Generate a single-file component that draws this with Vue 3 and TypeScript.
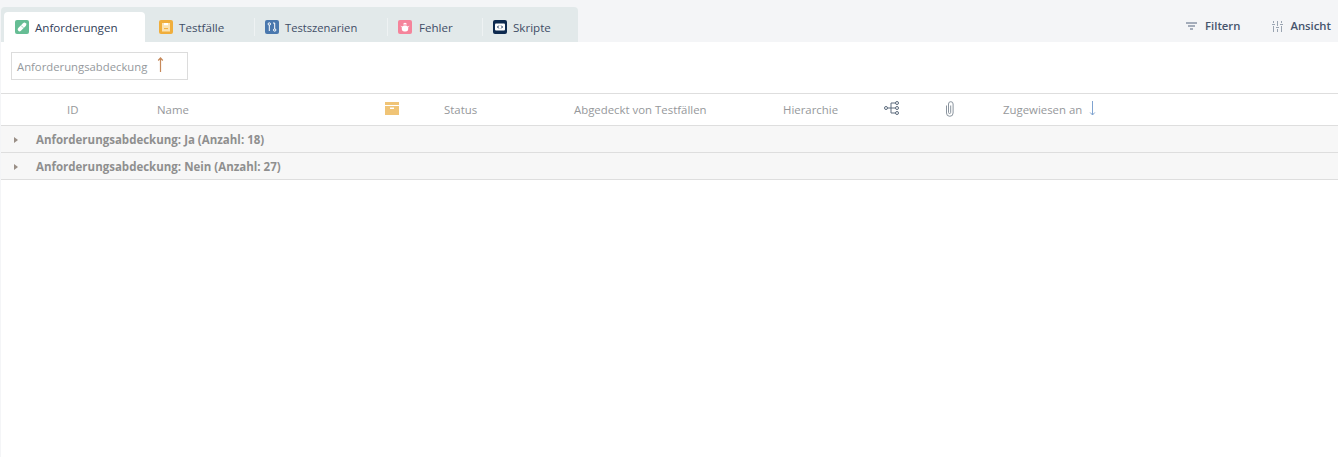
<script setup lang="ts">
interface Tab { label: string; color: string; kind: string; active?: boolean }
const tabs: Tab[] = [
  { label: 'Anforderungen', color: '#66bd94', kind: 'req', active: true },
  { label: 'Testfälle', color: '#f0ae3c', kind: 'case' },
  { label: 'Testszenarien', color: '#4a78ae', kind: 'scen' },
  { label: 'Fehler', color: '#f5849b', kind: 'bug' },
  { label: 'Skripte', color: '#0d2a4f', kind: 'script' },
]
const groups = ['Anforderungsabdeckung: Ja (Anzahl: 18)', 'Anforderungsabdeckung: Nein (Anzahl: 27)']
</script>

<template>
  <div class="page">
    <header class="top">
      <nav class="tabs">
        <div v-for="t in tabs" :key="t.label" class="tab" :class="[{ active: t.active }, 'tab-' + t.kind]">
          <span class="tab-icon" :style="{ background: t.color }">
            <svg v-if="t.kind === 'req'" width="14" height="14" viewBox="0 0 14 14" fill="none">
              <path d="M4.6 9.4 9.4 4.6" stroke="#fff" stroke-width="3.8" stroke-linecap="round" />
              <path d="M6.2 5.6 8.4 7.8" stroke="#66bd94" stroke-width=".7" />
            </svg>
            <svg v-else-if="t.kind === 'case'" width="14" height="14" viewBox="0 0 14 14">
              <rect x="3" y="3" width="8" height="8.5" fill="#fbe3b4" />
              <path d="M5 3h4v2.2H5z" fill="#fff" />
              <path d="M5 8.6h4" stroke="#f0ae3c" stroke-width="1" />
            </svg>
            <svg v-else-if="t.kind === 'scen'" width="14" height="14" viewBox="0 0 14 14" fill="none" stroke="#fff" stroke-width="1">
              <circle cx="4.3" cy="4" r="1.2" /><path d="M4.3 5.2V11" />
              <circle cx="9.7" cy="10" r="1.2" /><path d="M9.7 8.8V3H8" />
            </svg>
            <svg v-else-if="t.kind === 'bug'" width="14" height="14" viewBox="0 0 14 14">
              <path d="M5.2 4.6a1.8 1.8 0 0 1 3.6 0Z" fill="#fff" />
              <rect x="3.8" y="5.4" width="6.4" height="6" rx="2.6" fill="#fff" />
              <path d="M2.8 6.2 4 7M11.2 6.2 10 7" stroke="#fff" stroke-width=".8" />
            </svg>
            <svg v-else width="14" height="14" viewBox="0 0 14 14">
              <rect x="2" y="3.5" width="10" height="7" rx="1" fill="#fff" />
              <path d="M5.8 5.6 4.5 7l1.3 1.4M8.2 5.6 9.5 7 8.2 8.4" fill="none" stroke="#0d2a4f" stroke-width="1" />
            </svg>
          </span>
          <span class="tab-label">{{ t.label }}</span>
        </div>
      </nav>
      <div class="actions">
        <button class="action filter-action" type="button">
          <svg width="11" height="8" viewBox="0 0 11 8" fill="none" stroke="#54657e" stroke-width="1">
            <path d="M0 1h11M2 4h7M4 7h3" />
          </svg>
          Filtern
        </button>
        <button class="action view-action" type="button">
          <svg width="11" height="11" viewBox="0 0 11 11" fill="none" stroke="#9aa4b1" stroke-width="1">
            <path d="M1.5 0v2M1.5 5v6M5.5 0v5M5.5 8v3M9.5 0v2M9.5 5v6M0 3.5h3M4 6.5h3M8 3.5h3" />
          </svg>
          Ansicht
        </button>
      </div>
    </header>

    <main class="content">
      <div class="toolbar">
        <div class="group-chip">
          <span>Anforderungsabdeckung</span>
          <svg width="7" height="15" viewBox="0 0 7 15" fill="none" stroke="#c6895a" stroke-width="1.2">
            <path d="M3.5 15V1M1.2 3.5l2.3-2.5 2.3 2.5" />
          </svg>
        </div>
      </div>

      <div class="head">
        <span>ID</span>
        <span>Name</span>
        <span class="head-icon">
          <svg width="14" height="13" viewBox="0 0 14 13">
            <path d="M0 0h14v3H0z" fill="#f0c476" />
            <path d="M0 4h14v9H0z" fill="#f0c476" />
            <path d="M5 5.5h4v1.5H5z" fill="#fff" />
          </svg>
        </span>
        <span>Status</span>
        <span>Abgedeckt von Testfällen</span>
        <span>Hierarchie</span>
        <span class="head-icon">
          <svg width="15" height="14" viewBox="0 0 15 14" fill="none" stroke="#5c6b7d" stroke-width="1">
            <circle cx="2" cy="7" r="1.5" /><circle cx="13" cy="2" r="1.5" /><circle cx="13" cy="7" r="1.5" /><circle cx="13" cy="12" r="1.5" />
            <path d="M3.5 7h8M7 7V2h4.5M7 7v5h4.5" />
          </svg>
        </span>
        <span class="head-icon clip">
          <svg width="10" height="16" viewBox="0 0 10 16" fill="none" stroke="#8a949e" stroke-width="1">
            <path d="M1.5 4.5v7.5a3.2 3.2 0 0 0 6.6 0V3a2.3 2.3 0 0 0-4.6 0v8.4a1 1 0 0 0 2.2 0V4.5" />
          </svg>
        </span>
        <span class="assigned">
          Zugewiesen an
          <svg width="7" height="15" viewBox="0 0 7 15" fill="none" stroke="#7fa3d0" stroke-width="1">
            <path d="M3.5 0v14M1.2 11.5l2.3 2.5 2.3-2.5" />
          </svg>
        </span>
      </div>

      <div v-for="g in groups" :key="g" class="group-row">
        <svg class="caret" width="4" height="6" viewBox="0 0 4 6"><path d="M0 0l4 3-4 3z" fill="#9a8f86" /></svg>
        <span>{{ g }}</span>
      </div>
    </main>
  </div>
</template>

<style scoped>
.page {
  width: 1338px;
  height: 457px;
  display: flex;
  flex-direction: column;
  background: #f4f5f7;
  font-family: "Open Sans", "Noto Sans", sans-serif;
  overflow: hidden;
}
.top {
  height: 42px;
  flex: none;
  display: flex;
  justify-content: space-between;
  align-items: flex-end;
  padding-left: 1px;
}
.tabs {
  display: flex;
  align-items: flex-end;
  width: 577px;
  height: 35px;
  padding-left: 3px;
  background: #e2e9ea;
  border-radius: 4px 4px 0 0;
  box-sizing: border-box;
}
.tab {
  position: relative;
  height: 30px;
  display: flex;
  align-items: center;
  gap: 6px;
  box-sizing: border-box;
  font-size: 11.6px;
  color: #3f4d66;
  white-space: nowrap;
}
.tab.active {
  background: #fff;
  border-radius: 4px 4px 0 0;
  color: #33415a;
}
.tab-req { width: 141px; padding-left: 11px; }
.tab-case { width: 109px; padding-left: 14px; }
.tab-scen { width: 133px; padding-left: 11px; }
.tab-bug { width: 95px; padding-left: 11px; }
.tab-bug .tab-label { margin-left: 1px; }
.tab-script { padding-left: 11px; }
.tab-scen .tab-label { font-size: 11.2px; }
.tab-scen::before,
.tab-bug::before,
.tab-script::before {
  content: "";
  position: absolute;
  left: 0;
  top: 6px;
  height: 18px;
  width: 1px;
  background: #eef2f3;
}
.tab-icon {
  width: 14px;
  height: 14px;
  border-radius: 2px;
  flex: none;
  display: flex;
}
.actions {
  display: flex;
  align-self: flex-start;
  margin-top: 18px;
  padding-right: 7px;
}
.action {
  display: flex;
  align-items: center;
  padding: 0;
  border: 0;
  background: none;
  font: 600 11.3px "Open Sans", "Noto Sans", sans-serif;
  line-height: 16px;
  color: #46546c;
}
.filter-action { gap: 8px; }
.view-action { gap: 7px; margin-left: 32px; }
.content {
  flex: 1;
  margin-left: 1px;
  background: #fff;
}
.toolbar {
  height: 51px;
  padding: 10px 0 0 10px;
  box-sizing: border-box;
}
.group-chip {
  width: 177px;
  height: 28px;
  box-sizing: border-box;
  border: 1px solid #dcdcdc;
  display: flex;
  align-items: center;
  gap: 10px;
  padding-left: 5px;
  font-size: 11.3px;
  color: #95999d;
  white-space: nowrap;
}
.group-chip svg { margin-top: -3px; }
.head {
  height: 33px;
  box-sizing: border-box;
  border-top: 1px solid #dedede;
  border-bottom: 1px solid #dedede;
  display: grid;
  grid-template-columns: 90px 228px 59px 130px 209px 101px 61px 58px 1fr;
  align-items: center;
  padding-left: 66px;
  font-size: 11.4px;
  color: #96989b;
  white-space: nowrap;
}
.head-icon { display: flex; }
.head-icon svg { margin-top: -3px; }
.head-icon.clip svg { margin-top: -2px; }
.assigned {
  display: flex;
  align-items: center;
  gap: 7px;
}
.assigned svg { margin-top: -3px; }
.group-row {
  height: 27px;
  box-sizing: border-box;
  border-bottom: 1px solid #dedede;
  background: #f7f7f7;
  display: flex;
  align-items: center;
  padding-left: 13px;
  gap: 18px;
  font-size: 11.5px;
  font-weight: 700;
  color: #8f8f8f;
  white-space: nowrap;
}
.caret { flex: none; margin-top: 2px; }
</style>

<style>
body { margin: 0; }
</style>
